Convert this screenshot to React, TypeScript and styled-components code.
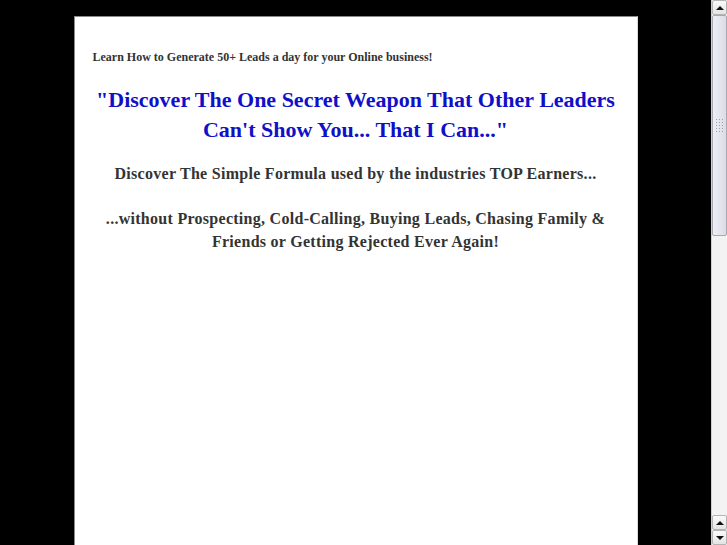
import { FC } from "react";
import styled, { createGlobalStyle } from "styled-components";

const GlobalStyle = createGlobalStyle`
  html, body {
    margin: 0;
    padding: 0;
    background: #000;
    overflow: hidden;
  }
`;

type ArrowProps = {
  dir: "up" | "down";
};

export const App: FC = () => {
  return (
    <>
      <GlobalStyle />
      <SFrame>
        <SViewport>
          <SPanel>
            <STagline>
              Learn How to Generate 50+ Leads a day for your Online business!
            </STagline>
            <SHeadline>
              "Discover The One Secret Weapon That Other Leaders
              <br />
              Can't Show You... That I Can..."
            </SHeadline>
            <SSubhead>
              Discover The Simple Formula used by the industries TOP Earners...
            </SSubhead>
            <SSubhead space={22}>
              ...without Prospecting, Cold-Calling, Buying Leads, Chasing Family &amp;
              <br />
              Friends or Getting Rejected Ever Again!
            </SSubhead>
          </SPanel>
        </SViewport>
        <SScrollbar>
          <SScrollButton>
            <SArrow dir="up" />
          </SScrollButton>
          <SThumb>
            <SGrip />
          </SThumb>
          <STrack />
          <SScrollButton>
            <SArrow dir="up" />
          </SScrollButton>
          <SScrollButton>
            <SArrow dir="down" />
          </SScrollButton>
        </SScrollbar>
      </SFrame>
    </>
  );
};

export default App;

const SFrame = styled.div`
  display: flex;
  width: 727px;
  height: 545px;
  background: #000;
`;

const SViewport = styled.div`
  flex: 1;
  display: flex;
  justify-content: center;
  padding-top: 16px;
  overflow: hidden;
`;

const SPanel = styled.div`
  width: 544px;
  background: #fff;
  border-left: 1px solid #8a8a8a;
  border-top: 1px solid #8a8a8a;
  border-right: 1px solid #d8d8d8;
  padding: 33px 0 0 18px;
  font-family: "Liberation Serif", "Times New Roman", serif;
  font-weight: bold;
`;

const STagline = styled.p`
  margin: 0;
  font-size: 12px;
  line-height: 14px;
  color: #333;
`;

const SHeadline = styled.h1`
  margin: 21px 0 0 -18px;
  font-size: 22px;
  line-height: 30px;
  color: #1010c8;
  text-align: center;
`;

const SSubhead = styled.p<{ space?: number }>`
  margin: ${(props) => props.space ?? 17}px 0 0 -18px;
  font-size: 16px;
  line-height: 23px;
  color: #333;
  text-align: center;
  letter-spacing: 0.28px;
`;

const SScrollbar = styled.div`
  width: 15px;
  display: flex;
  flex-direction: column;
  background: #f1f1f1;
  border-left: 1px solid #cfcfcf;
`;

const SScrollButton = styled.div`
  flex: none;
  display: flex;
  align-items: center;
  justify-content: center;
  background: linear-gradient(#fafafa, #e4e4e4);
  border: 1px solid #b4b4b4;
  border-radius: 2px;
  box-sizing: border-box;
  height: 15px;
`;

const SArrow = styled.span<ArrowProps>`
  width: 0;
  height: 0;
  border-left: 4px solid transparent;
  border-right: 4px solid transparent;
  ${(props) =>
    props.dir === "up"
      ? "border-bottom: 4px solid #111;"
      : "border-top: 4px solid #111;"}
`;

const SThumb = styled.div`
  height: 221px;
  flex: none;
  display: flex;
  align-items: center;
  justify-content: center;
  background: linear-gradient(to right, #eeeef6, #dcdce6);
  border: 1px solid #a8a8b4;
  border-radius: 2px;
  box-sizing: border-box;
`;

const SGrip = styled.div`
  width: 9px;
  height: 16px;
  background-image: radial-gradient(circle, #a0a0a8 0.8px, transparent 1px);
  background-size: 3px 3px;
`;

const STrack = styled.div`
  flex: 1;
  background: #f3f3f3;
`;
